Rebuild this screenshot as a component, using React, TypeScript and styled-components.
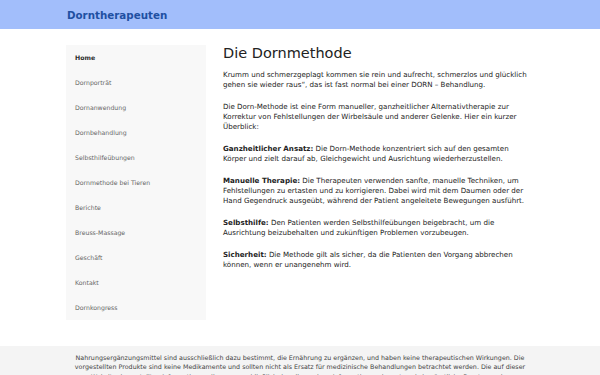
import React from 'react';
import styled, { createGlobalStyle } from 'styled-components';

const GlobalStyle = createGlobalStyle`
    html, body {
        margin: 0;
        padding: 0;
        background: #ffffff;
        font-family: "DejaVu Sans", "Liberation Sans", sans-serif;
        color: #222;
    }
`

const Header = styled.header`
    background: #a2befb;
    height: 29px;
    display: flex;
    align-items: center;
`

const Container = styled.div`
    width: 468px;
    margin: 0 auto;
`

const Brand = styled.div`
    font-size: 10.3px;
    font-weight: bold;
    color: #1f50a2;
    padding-left: 1px;
`

const Layout = styled(Container)`
    display: flex;
    gap: 17px;
    align-items: flex-start;
    padding-top: 16px;
    min-height: 301px;
`

const Sidebar = styled.nav`
    width: 140px;
    flex-shrink: 0;
    background: #f8f8f8;
    display: flex;
    flex-direction: column;
`

const NavItem = styled.a<{ $active?: boolean }>`
    height: 25px;
    display: flex;
    align-items: center;
    padding-left: 9px;
    font-size: 6.2px;
    color: ${p => p.$active ? '#2a2a2a' : '#666'};
    font-weight: ${p => p.$active ? 600 : 'normal'};
    text-decoration: none;
`

const Main = styled.main`
    flex: 1;
    min-width: 0;
    padding-right: 5px;
`

const Title = styled.h1`
    font-size: 14.5px;
    font-weight: normal;
    margin: 0 0 9px;
    line-height: 16px;
    color: #222;
`

const Para = styled.p`
    font-size: 7.1px;
    line-height: 10px;
    margin: 0 0 12px;
    color: #222;

    b {
        font-weight: bold;
    }
`

const Footer = styled.footer`
    background: #f4f4f4;
    padding: 7px 0 0;
`

const FooterText = styled.p`
    width: 458px;
    margin: 0 auto;
    text-align: center;
    font-size: 6.35px;
    line-height: 9.3px;
    color: #444;
`

const navItems = [
    'Home',
    'Dornporträt',
    'Dornanwendung',
    'Dornbehandlung',
    'Selbsthilfeübungen',
    'Dornmethode bei Tieren',
    'Berichte',
    'Breuss-Massage',
    'Geschäft',
    'Kontakt',
    'Dornkongress',
]

function App() {
    return (
        <>
            <GlobalStyle />
            <Header>
                <Container>
                    <Brand>Dorntherapeuten</Brand>
                </Container>
            </Header>
            <Layout>
                <Sidebar>
                    {navItems.map((item, i) =>
                        <NavItem key={item} href="#" $active={i === 0}>{item}</NavItem>)}
                </Sidebar>
                <Main>
                    <Title>Die Dornmethode</Title>
                    <Para>
                        Krumm und schmerzgeplagt kommen sie rein und aufrecht, schmerzlos und glücklich
                        gehen sie wieder raus“, das ist fast normal bei einer DORN – Behandlung.
                    </Para>
                    <Para>
                        Die Dorn-Methode ist eine Form manueller, ganzheitlicher Alternativtherapie zur
                        Korrektur von Fehlstellungen der Wirbelsäule und anderer Gelenke. Hier ein kurzer
                        Überblick:
                    </Para>
                    <Para>
                        <b>Ganzheitlicher Ansatz:</b> Die Dorn-Methode konzentriert sich auf den gesamten
                        Körper und zielt darauf ab, Gleichgewicht und Ausrichtung wiederherzustellen.
                    </Para>
                    <Para>
                        <b>Manuelle Therapie:</b> Die Therapeuten verwenden sanfte, manuelle Techniken, um
                        Fehlstellungen zu ertasten und zu korrigieren. Dabei wird mit dem Daumen oder der
                        Hand Gegendruck ausgeübt, während der Patient angeleitete Bewegungen ausführt.
                    </Para>
                    <Para>
                        <b>Selbsthilfe:</b> Den Patienten werden Selbsthilfeübungen beigebracht, um die
                        Ausrichtung beizubehalten und zukünftigen Problemen vorzubeugen.
                    </Para>
                    <Para>
                        <b>Sicherheit:</b> Die Methode gilt als sicher, da die Patienten den Vorgang abbrechen
                        können, wenn er unangenehm wird.
                    </Para>
                </Main>
            </Layout>
            <Footer>
                <FooterText>
                    Nahrungsergänzungsmittel sind ausschließlich dazu bestimmt, die Ernährung zu ergänzen, und haben keine therapeutischen Wirkungen. Die
                    vorgestellten Produkte sind keine Medikamente und sollten nicht als Ersatz für medizinische Behandlungen betrachtet werden. Die auf dieser
                    Website dargestellten Informationen dienen ausschließlich der allgemeinen Information und ersetzen keine ärztliche Beratung oder Behandlung.
                </FooterText>
            </Footer>
        </>
    )
}

export default App
